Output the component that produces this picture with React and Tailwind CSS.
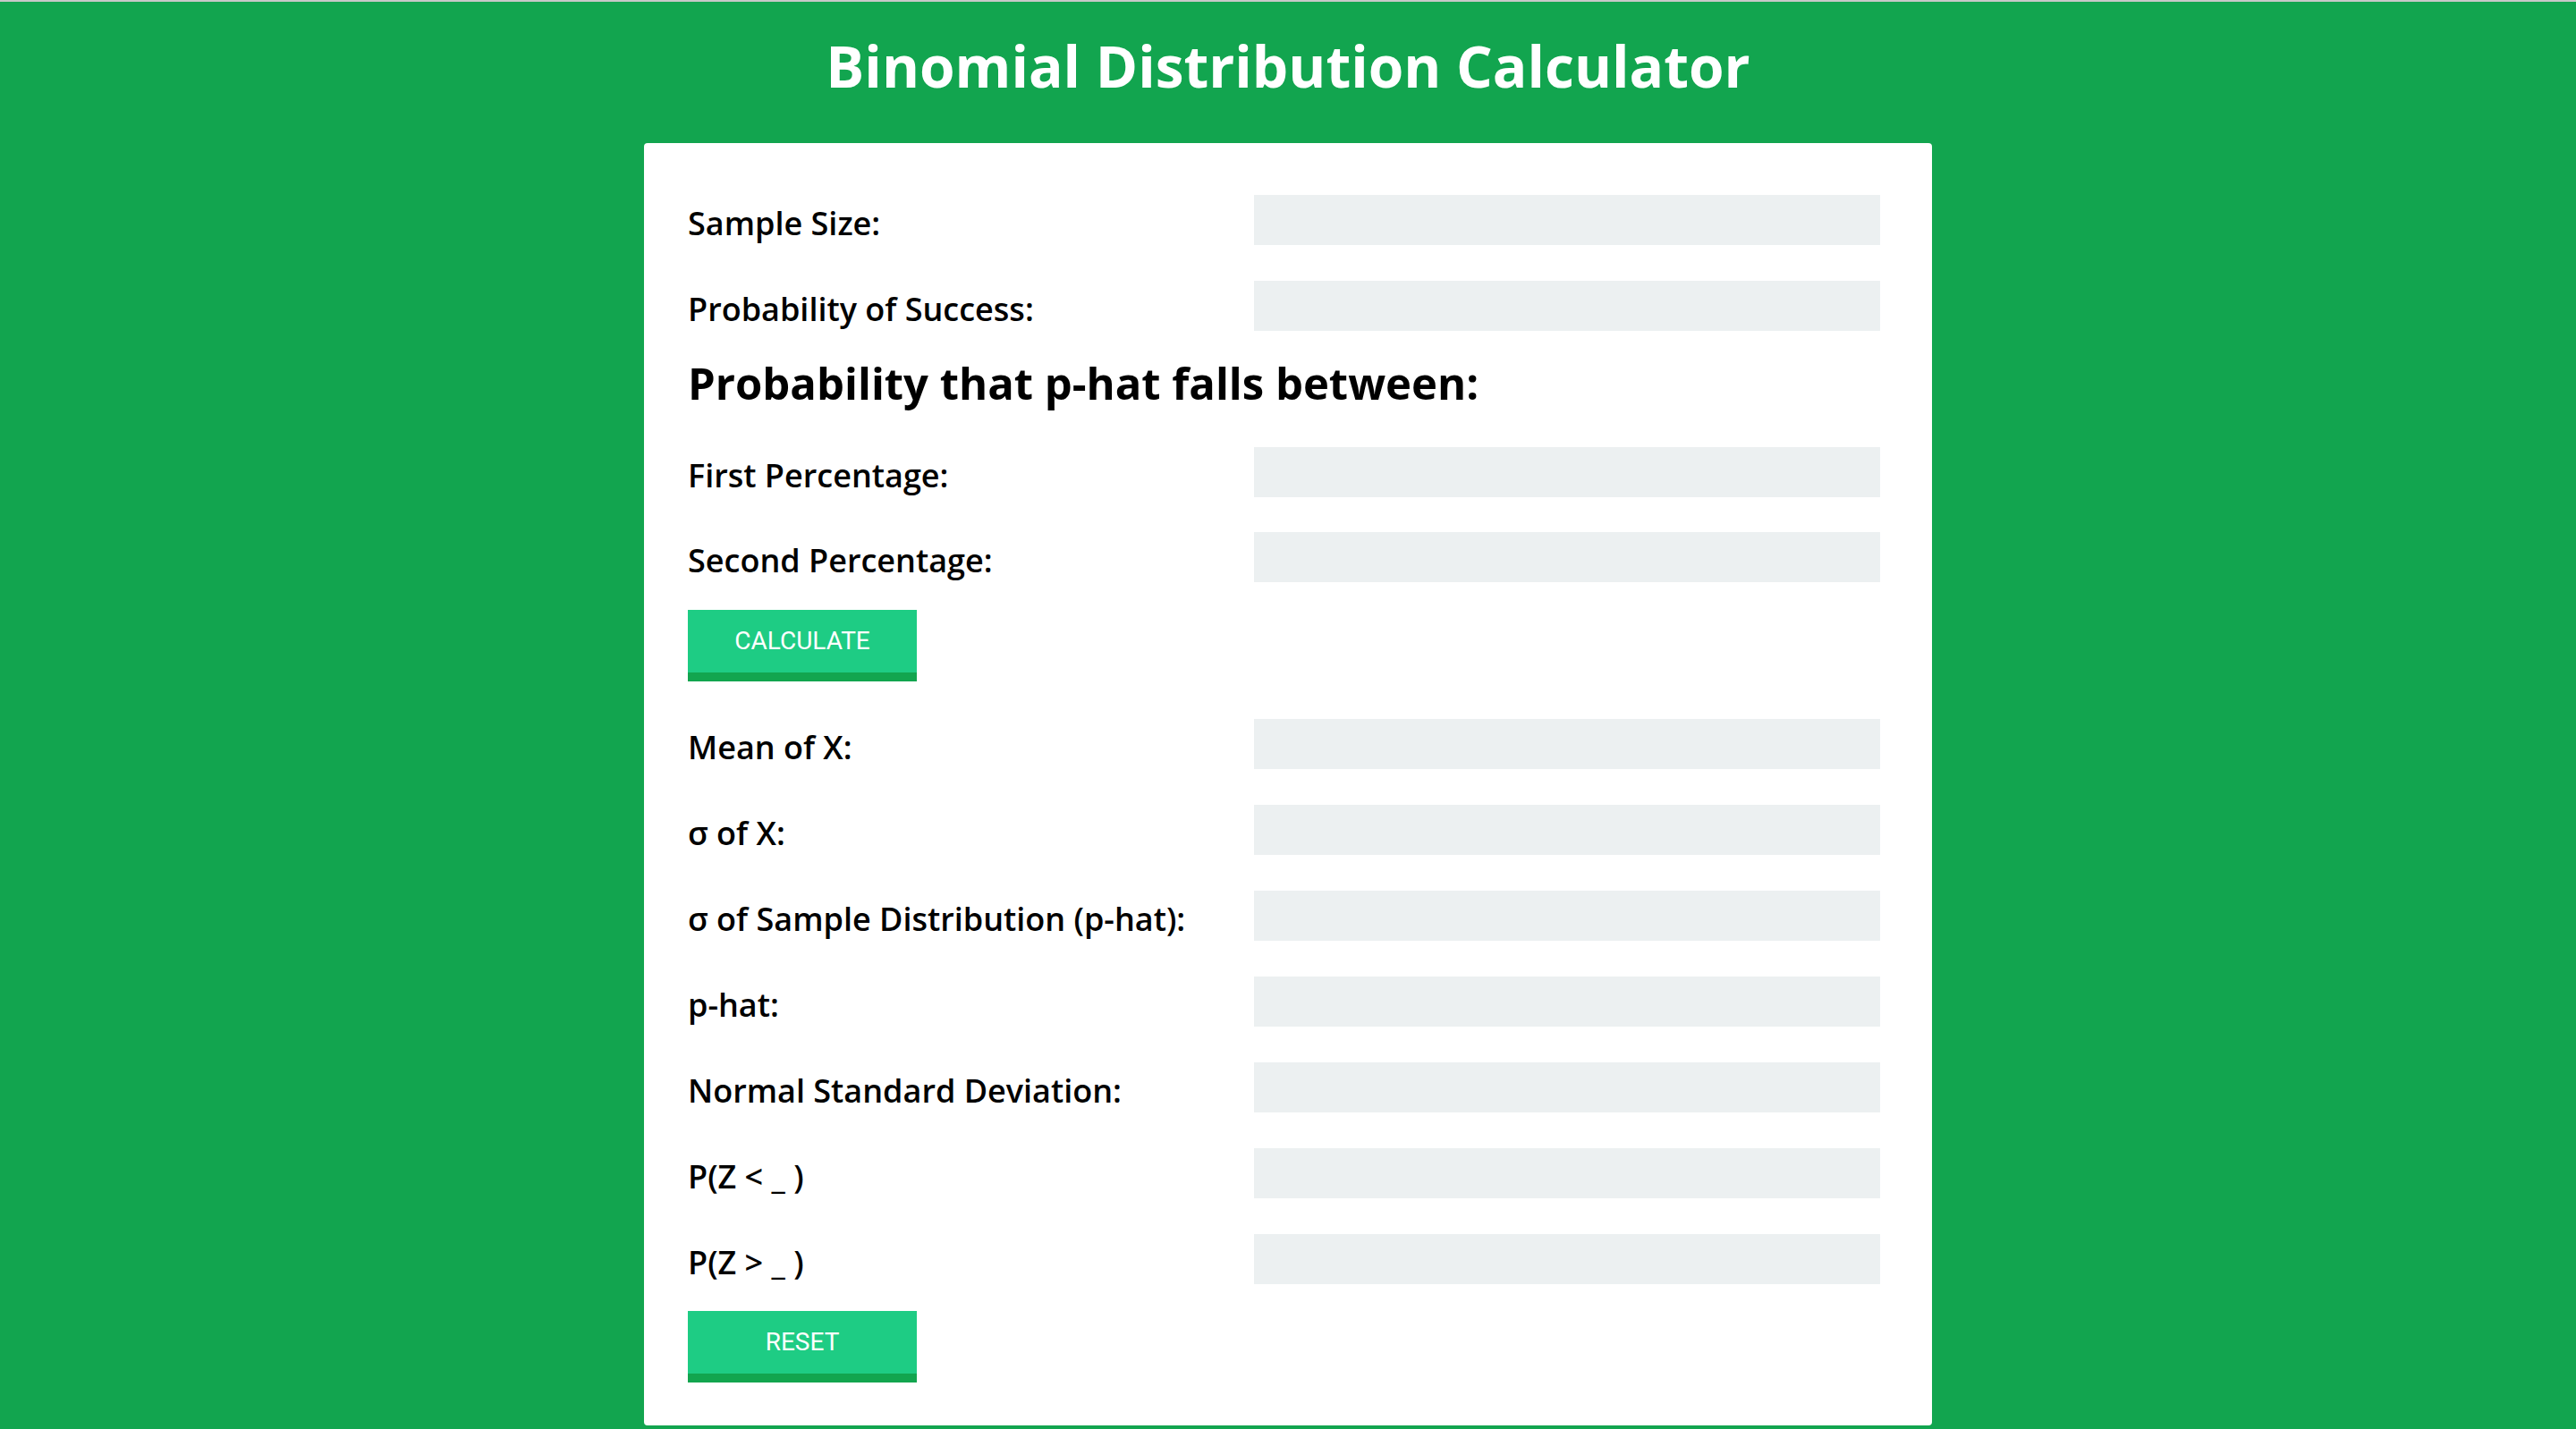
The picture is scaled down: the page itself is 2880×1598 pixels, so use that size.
import React from "react";

const Field = ({ label, className = "" }) => (
  <div className={`flex items-center h-[56px] ${className}`}>
    <label className="w-[633px] shrink-0 text-[36px] font-semibold text-black leading-none pt-[7px]">
      {label}
    </label>
    <input
      type="text"
      className="w-[700px] h-[56px] bg-[#ecf0f1] border-0 outline-none px-4 text-[28px]"
    />
  </div>
);

const GreenButton = ({ children, className = "" }) => (
  <button
    type="button"
    className={`w-[256px] h-[80px] bg-[#1ecc84] border-b-[10px] border-[#12a54f] text-white text-[28px] uppercase font-['Roboto',sans-serif] ${className}`}
  >
    {children}
  </button>
);

const App = () => {
  return (
    <div className="min-h-screen bg-[#12a54f] border-t-2 border-[#c8c8c8] font-['Open_Sans',sans-serif]">

      {/* Header */}
      <div className="h-[158px] flex items-center justify-center pb-[14px]">
        <h1 className="text-[64px] font-bold text-white leading-none">
          Binomial Distribution Calculator
        </h1>
      </div>

      {/* Card */}
      <div className="w-[1440px] mx-auto bg-white rounded-[4px] pl-[49px] pr-[58px] pt-[58px] pb-[48px]">

        <Field label="Sample Size:" />
        <Field label="Probability of Success:" className="mt-[40px]" />

        <h2 className="h-[130px] flex items-center pb-[14px] text-[49px] font-bold text-black leading-none">
          Probability that p-hat falls between:
        </h2>

        <Field label="First Percentage:" />
        <Field label="Second Percentage:" className="mt-[39px]" />

        <GreenButton className="mt-[31px]">Calculate</GreenButton>

        <Field label="Mean of X:" className="mt-[42px]" />
        <Field label="σ of X:" className="mt-[40px]" />
        <Field label="σ of Sample Distribution (p-hat):" className="mt-[40px]" />
        <Field label="p-hat:" className="mt-[40px]" />
        <Field label="Normal Standard Deviation:" className="mt-[40px]" />
        <Field label="P(Z < _ )" className="mt-[40px]" />
        <Field label="P(Z > _ )" className="mt-[40px]" />

        <GreenButton className="mt-[30px]">Reset</GreenButton>

      </div>
    </div>
  );
};

export default App;
